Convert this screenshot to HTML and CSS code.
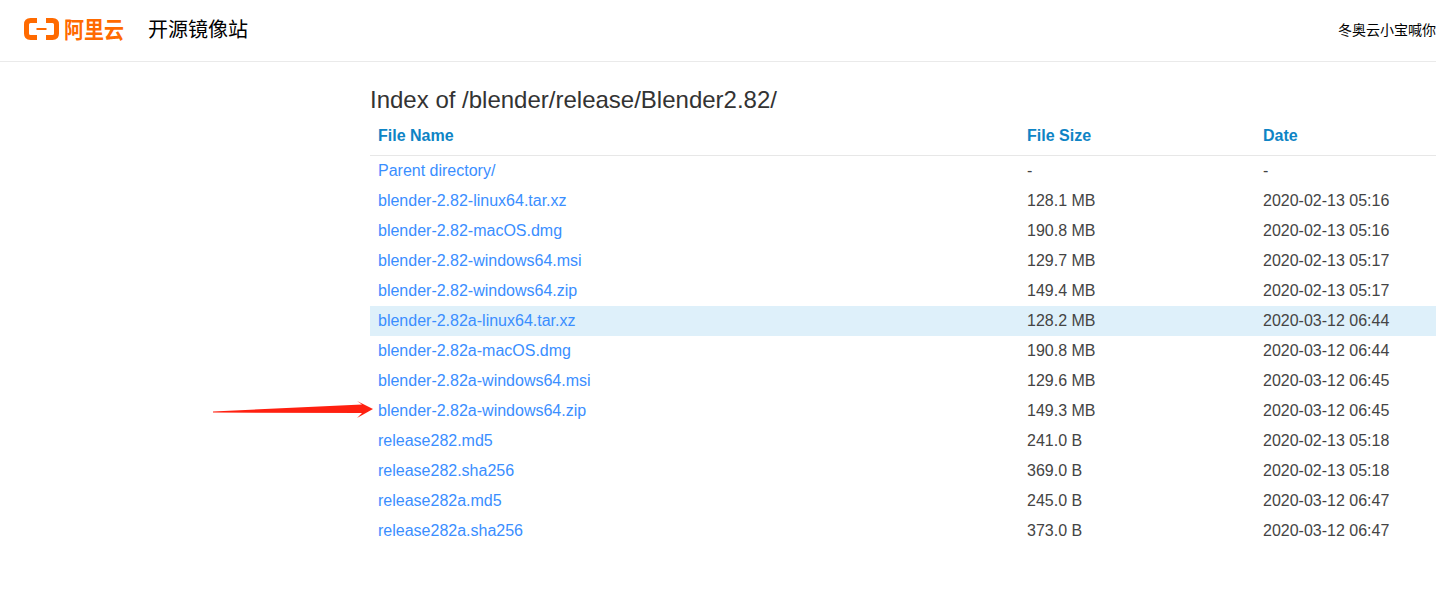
FILE: index.html
```html
<!DOCTYPE html>
<html lang="zh">
<head>
<meta charset="utf-8">
<title>开源镜像站</title>
<link rel="stylesheet" href="styles.css">
</head>
<body>
<header class="topbar">
  <div class="brand">
    <svg class="logo-mark" width="35" height="22" viewBox="0 0 35 22"><path d="M13 2.500H6.500Q2.500 2.500 2.500 6.500V15.500Q2.500 19.500 6.500 19.500H13" fill="none" stroke="#ff6a00" stroke-width="5"/><path d="M22 2.500H28.500Q32.500 2.500 32.500 6.500V15.500Q32.500 19.500 28.500 19.500H22" fill="none" stroke="#ff6a00" stroke-width="5"/><rect x="12.500" y="10" width="10" height="2" fill="#ff6a00"/></svg>
    <span class="logo-text">阿里云</span>
    <span class="site-name">开源镜像站</span>
  </div>
  <div class="user">冬奥云小宝喊你</div>
</header>
<main class="content">
  <h1 class="title">Index of /blender/release/Blender2.82/</h1>
  <table class="listing">
    <thead>
      <tr><th class="c-name">File Name</th><th class="c-size">File Size</th><th class="c-date">Date</th></tr>
    </thead>
    <tbody>
      <tr><td><a href="#">Parent directory/</a></td><td>-</td><td>-</td></tr>
      <tr><td><a href="#">blender-2.82-linux64.tar.xz</a></td><td>128.1 MB</td><td>2020-02-13 05:16</td></tr>
      <tr><td><a href="#">blender-2.82-macOS.dmg</a></td><td>190.8 MB</td><td>2020-02-13 05:16</td></tr>
      <tr><td><a href="#">blender-2.82-windows64.msi</a></td><td>129.7 MB</td><td>2020-02-13 05:17</td></tr>
      <tr><td><a href="#">blender-2.82-windows64.zip</a></td><td>149.4 MB</td><td>2020-02-13 05:17</td></tr>
      <tr class="hover"><td><a href="#">blender-2.82a-linux64.tar.xz</a></td><td>128.2 MB</td><td>2020-03-12 06:44</td></tr>
      <tr><td><a href="#">blender-2.82a-macOS.dmg</a></td><td>190.8 MB</td><td>2020-03-12 06:44</td></tr>
      <tr><td><a href="#">blender-2.82a-windows64.msi</a></td><td>129.6 MB</td><td>2020-03-12 06:45</td></tr>
      <tr><td><a href="#">blender-2.82a-windows64.zip</a></td><td>149.3 MB</td><td>2020-03-12 06:45</td></tr>
      <tr><td><a href="#">release282.md5</a></td><td>241.0 B</td><td>2020-02-13 05:18</td></tr>
      <tr><td><a href="#">release282.sha256</a></td><td>369.0 B</td><td>2020-02-13 05:18</td></tr>
      <tr><td><a href="#">release282a.md5</a></td><td>245.0 B</td><td>2020-03-12 06:47</td></tr>
      <tr><td><a href="#">release282a.sha256</a></td><td>373.0 B</td><td>2020-03-12 06:47</td></tr>
    </tbody>
  </table>
</main>
<svg class="arrow" width="170" height="24" viewBox="0 0 170 24"><polygon points="1,12.500 150,5.500 145,2 161,10 145,19 150,14 1,13.500" fill="#ff2010"/></svg>
</body>
</html>
```
FILE: styles.css
```css
* { box-sizing: border-box; }
html, body { margin: 0; padding: 0; height: 100%; overflow: hidden; background: #fff; }
body {
  position: relative;
  font-family: "Liberation Sans", Arial, "Noto Sans CJK SC", sans-serif;
  font-size: 16px;
  color: #333;
}
.topbar {
  height: 62px;
  border-bottom: 1px solid #eaeaea;
  display: flex;
  align-items: center;
  justify-content: space-between;
  padding: 0 0 4px 24px;
}
.brand { display: flex; align-items: center; }
.logo-mark { display: block; }
.logo-text {
  display: inline-block;
  margin-left: 5px;
  margin-top: -2px;
  font-family: "Noto Sans CJK SC", sans-serif;
  font-size: 23px;
  font-weight: 700;
  line-height: 24px;
  color: #ff6a00;
  transform: scaleX(0.87);
  transform-origin: left center;
}
.site-name {
  margin-left: 15px;
  font-family: "Noto Sans CJK SC", sans-serif;
  font-size: 20px;
  line-height: 24px;
  color: #000;
}
.user {
  width: 98px;
  flex: none;
  white-space: nowrap;
  font-family: "Noto Sans CJK SC", sans-serif;
  font-size: 14px;
  color: #000;
  margin-top: 1px;
}
.content { padding-left: 370px; width: 1500px; }
.title {
  margin: 0;
  padding-top: 24px;
  height: 56px;
  font-size: 24px;
  font-weight: 400;
  line-height: 28px;
  color: #333;
}
.listing {
  width: 1130px;
  table-layout: fixed;
  border-collapse: separate;
  border-spacing: 0;
}
.listing th {
  height: 38px;
  padding: 0 8px 1px;
  text-align: left;
  font-weight: 700;
  color: #0e84c5;
  border-bottom: 1px solid #e7e7e7;
}
.listing td { height: 30px; padding: 0 8px; color: #444; }
.listing a { color: #3a8eff; text-decoration: none; }
.hover td { background: #def0fa; }
.c-name { width: 649px; }
.c-size { width: 236px; }
.arrow { position: absolute; left: 212px; top: 399px; }
```
